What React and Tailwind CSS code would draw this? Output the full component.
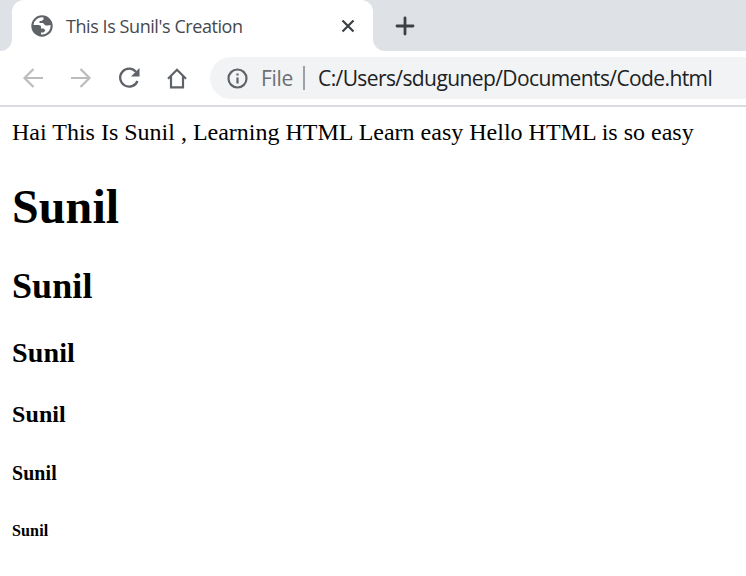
import React from "react";

function TabStrip() {
  return (
    <header className="flex h-[51px] bg-[#dee1e6]">
      <div className="w-3 bg-white">
        <div className="h-full rounded-br-[12px] bg-[#dee1e6]" />
      </div>
      <div className="bg-[#dee1e6]">
        <div className="flex h-full w-[361px] items-center rounded-t-[12px] bg-white pl-[18px] pr-[17px]">
          <svg className="size-6 shrink-0" viewBox="0 0 24 24">
            <circle cx="12" cy="12" r="10.7" fill="#5f6368" />
            <path
              d="M3.500 11A8.600 8.600 0 0 1 13.500 3.500V5.500L11.500 7H9.500V9H13L15.500 11.500H18L20.500 11A8.600 8.600 0 0 1 11 20.500V18.500H13.500L15.500 16.500L13.500 14.500H11V12L9 11Z"
              fill="white"
            />
          </svg>
          <span className="ml-3 grow whitespace-nowrap font-['Open_Sans',sans-serif] text-[18px] leading-6 tracking-[-0.43px] text-[#45494d]">
            This Is Sunil's Creation
          </span>
          <svg className="size-4" viewBox="0 0 16 16" stroke="#3c4043" strokeWidth="2.2">
            <path d="m2.500 2.500 11 11m0-11-11 11" />
          </svg>
        </div>
      </div>
      <div className="w-3 bg-white">
        <div className="h-full rounded-bl-[12px] bg-[#dee1e6]" />
      </div>
      <div className="flex items-center pl-[10px]">
        <svg className="size-5" viewBox="0 0 20 20" stroke="#3c4043" strokeWidth="2.800" strokeLinecap="round">
          <path d="M10 2v16M2 10h16" />
        </svg>
      </div>
    </header>
  );
}

function Toolbar() {
  return (
    <nav className="flex h-[56px] items-center border-b-2 border-[#dadce0] bg-white pl-[21px]">
      <svg className="size-6" viewBox="0 0 24 24" fill="none" stroke="#babcbe" strokeWidth="2.2">
        <path d="M22 12H3.500m9-9-9 9 9 9" />
      </svg>
      <svg className="ml-6 size-6" viewBox="0 0 24 24" fill="none" stroke="#babcbe" strokeWidth="2.2">
        <path d="M2 12h18.500m-9-9 9 9-9 9" />
      </svg>
      <svg className="ml-6 size-6" viewBox="0 0 24 24" fill="none" stroke="#5f6368" strokeWidth="2.300">
        <path d="M20.500 15a9 9 0 1 1-1.600-9.300" />
        <path d="M22.500 2v8.500H14Z" fill="#5f6368" stroke="none" />
      </svg>
      <svg className="ml-6 size-6" viewBox="0 0 24 24" fill="none" stroke="#5f6368" strokeWidth="2.200">
        <path d="M3 12.800 12 3.800l9 9M6 10.500V21.300h12V10.500" />
      </svg>
      <div className="ml-[21px] flex h-[42px] grow items-center rounded-l-full bg-[#f1f3f4] pl-[17px] font-['Open_Sans',sans-serif] text-[21px] leading-7 whitespace-nowrap">
        <svg className="size-[21px] shrink-0" viewBox="0 0 21 21" fill="none" stroke="#5f6368" strokeWidth="2.2">
          <circle cx="10.500" cy="10.500" r="9" />
          <path d="M10.500 9.500v6M10.500 5.500v2" />
        </svg>
        <span className="ml-[13px] w-[42px] tracking-[-0.3px] text-[#6b6f73]">File</span>
        <span className="h-6 w-[2px] bg-[#9aa0a6]" />
        <span className="ml-[13px] tracking-[-0.6px] text-[#202124]">C:/Users/sdugunep/Documents/Code.html</span>
      </div>
    </nav>
  );
}

export default function App() {
  return (
    <div className="h-[576px] w-[746px] overflow-hidden bg-white">
      <TabStrip />
      <Toolbar />
      <main className="px-3 pt-3 font-['Liberation_Serif',serif] text-[24px] leading-[normal] text-black">
        Hai This Is Sunil , Learning HTML Learn easy Hello HTML is so easy
        <h1 className="mt-[33px] mb-[31px] text-[48px] font-bold tracking-[0.1px]">Sunil</h1>
        <h2 className="mb-[0.83em] text-[36px] font-bold tracking-[0.1px]">Sunil</h2>
        <h3 className="my-[1em] text-[28.08px] font-bold tracking-[0.1px]">Sunil</h3>
        <h4 className="mt-[1.33em] text-[24px] font-bold tracking-[0.1px]">Sunil</h4>
        <h5 className="mt-[34.3px] text-[19.92px] font-bold tracking-[0.1px]">Sunil</h5>
        <h6 className="mt-[36.5px] text-[16.08px] font-bold tracking-[0.1px]">Sunil</h6>
      </main>
    </div>
  );
}
